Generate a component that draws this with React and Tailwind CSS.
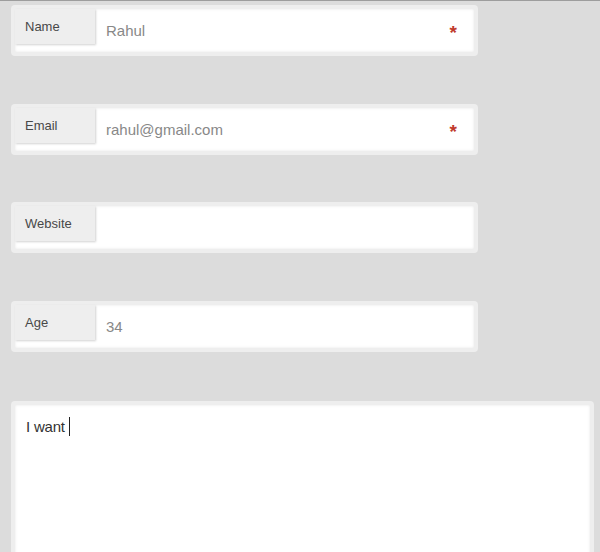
const fields = [
  { label: 'Name', value: 'Rahul', required: true, gap: 'mt-0' },
  { label: 'Email', value: 'rahul@gmail.com', required: true, gap: 'mt-[48px]' },
  { label: 'Website', value: '', required: false, gap: 'mt-[47px]' },
  { label: 'Age', value: '34', required: false, gap: 'mt-[48px]' },
];

const Field = ({ label, value, required, gap }) => (
  <div className={`${gap} w-[467px] h-[51px] rounded-[4px] bg-[#eeeeee] p-[4px]`}>
    <div className="flex items-start h-[43px] bg-white shadow-[inset_0_0_3px_rgba(0,0,0,0.1)]">
      <div className="flex items-center w-[80px] h-[35px] pl-[10px] bg-[#eeeeee] text-[13px] text-[#484848] shadow-[1px_1px_2px_rgba(0,0,0,0.18)]">
        {label}
      </div>
      <div className="flex-1 self-center pl-[11px] pt-[1px] text-[15px] text-[#888]">{value}</div>
      {required && (
        <div className="self-center pr-[17px] pt-[3px] text-[19px] font-bold leading-none text-[#c0392b]">
          *
        </div>
      )}
    </div>
  </div>
);

export default function App() {
  return (
    <div
      className="h-[552px] overflow-hidden bg-[#dcdcdc] border-t border-[#9d9d9d] pt-[4px] pl-[11px]"
      style={{ fontFamily: '"Liberation Sans", Arial, sans-serif' }}
    >
      <div className="flex flex-col">
        {fields.map((f) => (
          <Field key={f.label} {...f} />
        ))}
        <div className="mt-[49px] w-[583px] h-[200px] rounded-[4px] bg-[#eeeeee] p-[4px]">
          <div className="h-full bg-white shadow-[inset_0_0_3px_rgba(0,0,0,0.1)] pl-[11px] pt-[12px] text-[15px] text-[#333] leading-[18px] tracking-[-0.2px]">
            I want
            <span className="inline-block align-[-4px] w-[1px] h-[19px] bg-[#222] ml-[4px]"></span>
          </div>
        </div>
      </div>
    </div>
  );
}
